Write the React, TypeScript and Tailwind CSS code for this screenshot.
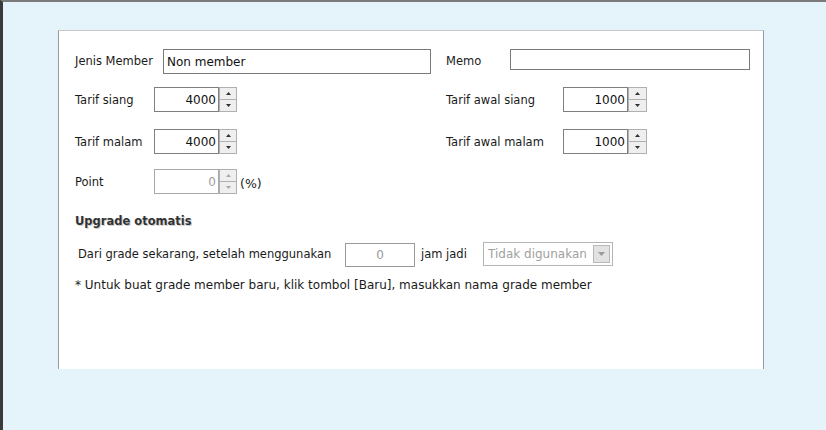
import React from "react";

const font = "font-['DejaVu_Sans',Tahoma,sans-serif]";

const Arrow = ({ up, disabled }: { up?: boolean; disabled?: boolean }) => (
  <svg width="5" height="3" viewBox="0 0 5 3" className="block">
    <path
      d={up ? "M0 3 L2.5 0 L5 3 Z" : "M0 0 L2.5 3 L5 0 Z"}
      fill={disabled ? "#a8a8a8" : "#303030"}
    />
  </svg>
);

const Spinner = ({
  value,
  disabled,
  btnW = "w-[18px]",
}: {
  value: string;
  disabled?: boolean;
  btnW?: string;
}) => (
  <div className="flex h-[25px]">
    <div
      className={`w-[65px] h-full border bg-white flex items-center justify-end pr-[2px] text-[12px] ${
        disabled ? "text-[#a0a0a0] border-[#a8a8a8]" : "text-[#111] border-[#7f7f7f]"
      }`}
    >
      {value}
    </div>
    <div className={`${btnW} flex flex-col h-full`}>
      <div className="h-1/2 border border-[#b0b0b0] bg-[#efefef] flex items-center justify-center">
        <Arrow up disabled={disabled} />
      </div>
      <div className="h-1/2 border border-t-0 border-[#b0b0b0] bg-[#efefef] flex items-center justify-center">
        <Arrow disabled={disabled} />
      </div>
    </div>
  </div>
);

export default function App() {
  return (
    <div
      className={`w-[826px] h-[430px] bg-[#e5f4fb] border-t-2 border-t-[#7a7a7a] border-l-[3px] border-l-[#3a3a3a] ${font} text-[11.5px] text-[#1a1a1a] overflow-hidden`}
    >
      <div className="ml-[55px] mt-[28px] w-[706px] h-[339px] bg-white border border-[#9a9a9a] border-t-[#c8c8c8] border-b-0 pl-[16px] pt-[18px]">
        {/* row 1 */}
        <div className="flex h-[25px] items-center">
          <div className="w-[371px] flex items-center">
            <span className="w-[88px]">Jenis Member</span>
            <div className="w-[268px] h-[25px] border border-[#7a7a7a] flex items-center pl-[3px] text-[12px] text-[#111]">
              Non member
            </div>
          </div>
          <div className="flex items-center">
            <span className="w-[64px]">Memo</span>
            <div className="w-[240px] h-[21px] border border-[#7a7a7a] -mt-[4px]" />
          </div>
        </div>

        {/* row 2 */}
        <div className="flex h-[25px] items-center mt-[13px]">
          <div className="w-[371px] flex items-center">
            <span className="w-[79px] pt-[2px]">Tarif siang</span>
            <Spinner value="4000" />
          </div>
          <div className="flex items-center">
            <span className="w-[117px] pt-[2px]">Tarif awal siang</span>
            <Spinner value="1000" btnW="w-[19px]" />
          </div>
        </div>

        {/* row 3 */}
        <div className="flex h-[25px] items-center mt-[17px]">
          <div className="w-[371px] flex items-center">
            <span className="w-[79px] pt-[2px]">Tarif malam</span>
            <Spinner value="4000" />
          </div>
          <div className="flex items-center">
            <span className="w-[117px] pt-[2px]">Tarif awal malam</span>
            <Spinner value="1000" btnW="w-[19px]" />
          </div>
        </div>

        {/* row 4 */}
        <div className="flex h-[25px] items-center mt-[15px]">
          <span className="w-[79px] pt-[2px]">Point</span>
          <Spinner value="0" disabled />
          <span className="ml-[3px] mt-[6px] text-[12.5px]">(%)</span>
        </div>

        <div className="mt-[20px] h-[16px] flex items-center font-bold text-[11.5px] text-[#333] [text-shadow:1px_1px_0_#cfcfcf]">
          Upgrade otomatis
        </div>

        <div className="flex items-center h-[25px] mt-[12px] pl-[3px]">
          <span className="w-[267px]">Dari grade sekarang, setelah menggunakan</span>
          <div className="w-[70px] h-[24px] border border-[#9a9a9a] flex items-center justify-center text-[#9a9a9a] text-[12px]">
            0
          </div>
          <span className="ml-[6px] w-[62px]">jam jadi</span>
          <div className="w-[130px] h-[24px] border border-[#b4b4b4] flex items-center text-[#a0a0a0] text-[12px] -mt-[2px]">
            <span className="flex-1 pl-[4px]">Tidak digunakan</span>
            <div className="w-[17px] h-[18px] mr-[2px] bg-[#e2e2e2] border border-[#b8b8b8] flex items-center justify-center">
              <svg width="7" height="4" viewBox="0 0 7 4">
                <path d="M0 0 L3.5 4 L7 0 Z" fill="#9a9a9a" />
              </svg>
            </div>
          </div>
        </div>

        <div className="mt-[10px] h-[16px] flex items-center text-[12px]">
          * Untuk buat grade member baru, klik tombol [Baru], masukkan nama grade member
        </div>
      </div>
    </div>
  );
}
